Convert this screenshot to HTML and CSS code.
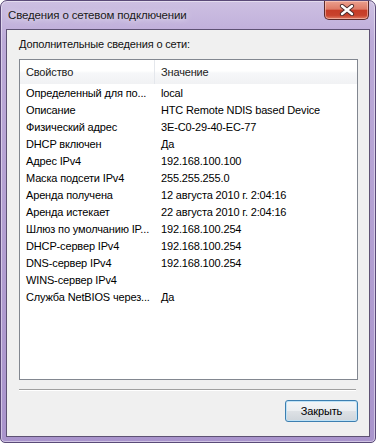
FILE: index.html
```html
<html>
<head>
    <title>Сведения о сетевом подключении</title>
    <link rel="stylesheet" href="styles.css">
</head>
<body>
<div class="window">
  <div class="titlebar">
      <span class="title">Сведения о сетевом подключении</span>
      <div class="close">
          <svg width="16" height="12" viewBox="0 0 16 12">
              <path d="M3 2 L13 10 M13 2 L3 10" stroke="#4a2a2a" stroke-width="4.2" stroke-linecap="round"/>
              <path d="M3 2 L13 10 M13 2 L3 10" stroke="#ffffff" stroke-width="2.4" stroke-linecap="round"/>
          </svg>
      </div>
  </div>
  <div class="client">
      <div class="caption">Дополнительные сведения о сети:</div>
      <div class="listview">
          <div class="header">
              <div class="hcol prop">Свойство</div>
              <div class="hcol">Значение</div>
          </div>
          <div class="rows">
              <div class="row"><span class="prop">Определенный для по...</span><span>local</span></div>
              <div class="row"><span class="prop">Описание</span><span>HTC Remote NDIS based Device</span></div>
              <div class="row"><span class="prop">Физический адрес</span><span>3E-C0-29-40-EC-77</span></div>
              <div class="row"><span class="prop">DHCP включен</span><span>Да</span></div>
              <div class="row"><span class="prop">Адрес IPv4</span><span>192.168.100.100</span></div>
              <div class="row"><span class="prop">Маска подсети IPv4</span><span>255.255.255.0</span></div>
              <div class="row"><span class="prop">Аренда получена</span><span>12 августа 2010 г. 2:04:16</span></div>
              <div class="row"><span class="prop">Аренда истекает</span><span>22 августа 2010 г. 2:04:16</span></div>
              <div class="row"><span class="prop">Шлюз по умолчанию IP...</span><span>192.168.100.254</span></div>
              <div class="row"><span class="prop">DHCP-сервер IPv4</span><span>192.168.100.254</span></div>
              <div class="row"><span class="prop">DNS-сервер IPv4</span><span>192.168.100.254</span></div>
              <div class="row"><span class="prop">WINS-сервер IPv4</span><span></span></div>
              <div class="row"><span class="prop">Служба NetBIOS через...</span><span>Да</span></div>
          </div>
      </div>
      <div class="separator"></div>
      <div class="buttons">
          <button class="btn">Закрыть</button>
      </div>
  </div>
</div>
</body>
</html>
```

FILE: styles.css
```css
body {
    margin: 0;
    background: #fff;
    font: 11px "Liberation Sans", Arial, sans-serif;
    letter-spacing: -0.15px;
    color: #000;
}

.window {
    width: 376px;
    height: 443px;
    box-sizing: border-box;
    border: 1px solid #5a4a78;
    border-radius: 7px 7px 5px 5px;
    background: linear-gradient(to bottom, #cdc0e2 0%, #bcaad8 40px, #a994cc 100%);
    box-shadow: inset 0 0 0 1px rgba(255, 255, 255, 0.45);
    padding: 0 5px 5px 5px;
    display: flex;
    flex-direction: column;
}

.titlebar {
    height: 28px;
    display: flex;
    align-items: flex-start;
    justify-content: space-between;
}

.title {
    margin: 8px 0 0 2px;
    font-size: 11.5px;
    color: #1a1a1a;
    text-shadow: 0 0 6px rgba(255, 255, 255, 0.9);
}

.close {
    width: 45px;
    height: 19px;
    margin-right: 1px;
    box-sizing: border-box;
    border: 1px solid #5b2a2a;
    border-top: none;
    border-radius: 0 0 5px 5px;
    background: linear-gradient(to bottom, #eba08e 0%, #de7a66 45%, #c63c27 52%, #c8432d 80%, #e27d66 100%);
    box-shadow: inset 0 0 0 1px rgba(255, 220, 210, 0.5);
    display: flex;
    align-items: center;
    justify-content: center;
}

.client {
    flex: 1;
    background: #f0f0f0;
    border: 1px solid #5e5274;
    padding: 0 11px 0 12px;
    display: flex;
    flex-direction: column;
}

.caption {
    margin-top: 7px;
    line-height: 15px;
    color: #111;
}

.listview {
    margin-top: 7px;
    height: 321px;
    box-sizing: border-box;
    border: 1px solid #828790;
    background: #fff;
}

.header {
    display: flex;
    height: 24px;
    background: linear-gradient(to bottom, #ffffff 0%, #ffffff 45%, #f6f7f9 55%, #f1f2f4 100%);
}

.hcol {
    padding-left: 6px;
    line-height: 24px;
    color: #222;
}

.hcol.prop {
    width: 128px;
    border-right: 1px solid #e4e7ec;
}

.rows {
    padding-top: 1px;
}

.row {
    display: flex;
    height: 17px;
    line-height: 17px;
    white-space: nowrap;
}

.row .prop {
    width: 141px;
    padding-left: 6px;
    box-sizing: border-box;
}

.separator {
    margin: 9px 2px 0 0;
    border-top: 1px solid #a0a0a0;
    border-bottom: 1px solid #ffffff;
}

.buttons {
    display: flex;
    justify-content: flex-end;
    margin-top: 9px;
}

.btn {
    width: 73px;
    height: 22px;
    font: 11px "Liberation Sans", Arial, sans-serif;
    letter-spacing: -0.15px;
    color: #000;
    border: 1px solid #3c7fb1;
    border-radius: 3px;
    background: linear-gradient(to bottom, #f3f5f7 0%, #ebeef1 48%, #dde1e5 52%, #cfd5db 100%);
    box-shadow: inset 0 0 0 1px #bfe2f6;
    padding: 0;
}
```
